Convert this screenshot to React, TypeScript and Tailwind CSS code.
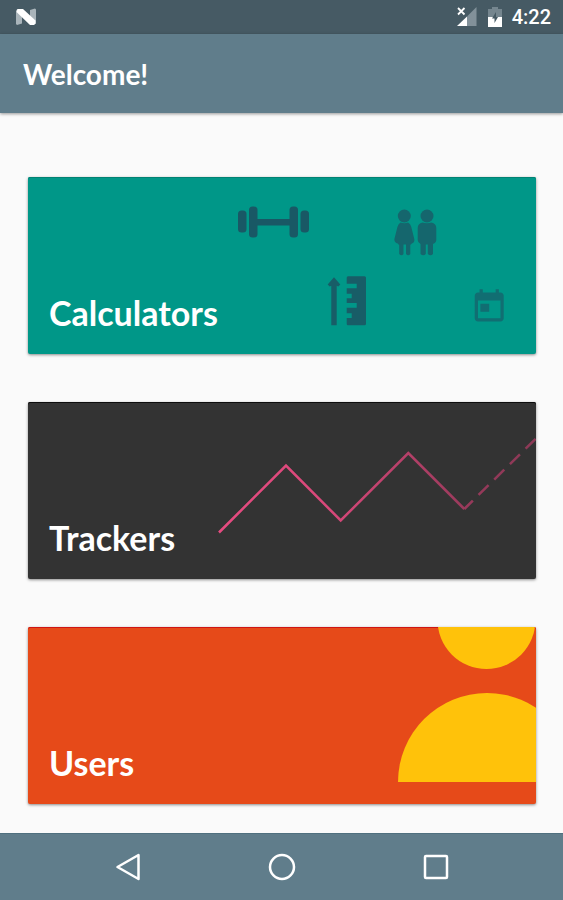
import type { ReactNode } from "react";

function StatusBar() {
  return (
    <div className="flex h-[34px] items-center justify-between bg-[#465a64] pl-[15px] pr-3">
      <svg width="22" height="18" viewBox="0 0 22 18" aria-label="Android N">
        <path d="M1 2.500 2.500 1 7 5v10.500L2 17l-1-1z" fill="#a9b4ba" />
        <path d="M15 2l5-1.500 1 1V15l-1.500 1.500L15 12z" fill="#a9b4ba" />
        <path d="M2.500 1H8l12.500 11.500v3L19 17h-4L1.500 4z" fill="#fff" />
      </svg>

      <div className="flex items-center">
        <svg width="22" height="20" viewBox="0 0 22 20" aria-label="No signal">
          <path d="M20.500 0v19H11V9.500z" fill="#82919a" />
          <path d="M11 9.500V19H1z" fill="#fff" />
          <path d="M2 1l6.500 6.500M8.500 1L2 7.500" stroke="#fff" strokeWidth="1.800" />
        </svg>
        <svg
          className="ml-[9px]"
          width="16"
          height="22"
          viewBox="0 0 16 22"
          aria-label="Battery charging"
        >
          <path d="M5 1h6v2h4v8H1V3h4z" fill="#75868f" />
          <path d="M1 11h14v10H1z" fill="#fff" />
          <path d="M9 6 5 12.500h2.500V17l3.500-6H9z" fill="#465a64" />
        </svg>
        <span className="ml-[9px] font-['Roboto',sans-serif] text-[20px] font-medium leading-6 text-white">
          4:22
        </span>
      </div>
    </div>
  );
}

function CalculatorsArt() {
  return (
    <>
      {/* dumbbell */}
      <g fill="#195865">
        <rect x="210" y="33.500" width="8.500" height="22" rx="3.500" />
        <rect x="221" y="29.500" width="8.500" height="31" rx="3.500" />
        <rect x="227" y="42" width="37" height="6.500" />
        <rect x="261.500" y="29.500" width="8.500" height="31" rx="3.500" />
        <rect x="272.500" y="33.500" width="8.500" height="22" rx="3.500" />
      </g>

      {/* couple */}
      <g fill="#15666d">
        <circle cx="376.300" cy="39" r="6.500" />
        <path d="M372.500 45.500q3.800 1.500 7.600 0 2.400 1 3.200 4.500l3 12q.5 4-2.500 4.500-1 1.200-1.500 1.200V77q-2 2.500-4.300 0V67.500h-2.500V77q-2 2.500-4.300 0v-9.300q-.7 0-1.500-1.200-3.600-.8-3.300-4.500l3-12q1-3.500 3.100-4.500z" />
        <circle cx="399" cy="39" r="6.500" />
        <path d="M394.500 45.500q4.500 1.500 9 0 4.800 1.200 4.800 5.500v12q0 2.500-3.300 4V77q-2.500 2.500-5.200 0V67.500h-2V77q-2.500 2.500-5.300 0V67q-2.800-1.500-2.800-4V51q0-4.300 4.800-5.500z" />
      </g>

      {/* height ruler */}
      <g fill="#185d67">
        <path d="M306 100.300l6.300 7.200-2 2-1.600-.8v39.600h-5.400v-39.600l-1.600.8-2-2z" />
        <path d="M320 99.300h16.500q1.500 0 1.500 1.500v46q0 1.500-1.500 1.500H320q-1.300 0-1.300-1.500V141h5v-4.700h-5v-5.600h10V126h-10v-4.700h5v-4.600h-5v-5.400h10v-4.600h-10v-5.900q0-1.500 1.300-1.500z" />
      </g>

      {/* calendar */}
      <path
        transform="translate(441.900 110.700) scale(1.610)"
        fill="#116e72"
        d="M19 3h-1V1h-2v2H8V1H6v2H5c-1.110 0-1.990.9-1.990 2L3 19c0 1.100.89 2 2 2h14c1.100 0 2-.9 2-2V5c0-1.100-.9-2-2-2zm0 16H5V8h14v11zM6.500 10H12v5H6.500z"
      />
    </>
  );
}

function TrackersArt() {
  return (
    <>
      <defs>
        <linearGradient
          id="trend"
          gradientUnits="userSpaceOnUse"
          x1="191"
          y1="0"
          x2="508"
          y2="0"
        >
          <stop offset="0" stopColor="#e64b80" />
          <stop offset="0.350" stopColor="#d9487a" />
          <stop offset="0.800" stopColor="#96395a" />
          <stop offset="1" stopColor="#8c3956" />
        </linearGradient>
      </defs>
      <g fill="none" stroke="url(#trend)" strokeWidth="2.500">
        <path d="M191 130.500 258 63.500 312.700 118.500 380.300 51 436.300 107" />
        <path d="M436.300 107 509 35.500" strokeDasharray="14 8" strokeDashoffset="2" />
      </g>
    </>
  );
}

function UsersArt() {
  return (
    <g fill="#ffc20a">
      <circle cx="458.500" cy="-7" r="49" />
      <path d="M370 155a89 89 0 0 1 178 0z" />
    </g>
  );
}

type MenuCardProps = {
  title: string;
  href: string;
  color: string;
  children: ReactNode;
};

function MenuCard({ title, href, color, children }: MenuCardProps) {
  return (
    <a
      href={href}
      className={`relative flex h-[177px] items-end overflow-hidden rounded-[2px] px-[21px] pb-[21px] shadow-[0_1px_3px_rgba(0,0,0,0.45)] inset-shadow-[0_1px_0] ${color}`}
    >
      <svg
        className="absolute right-0 top-0"
        width="508"
        height="177"
        viewBox="0 0 508 177"
        aria-hidden="true"
      >
        {children}
      </svg>
      <span className="relative text-[34px] font-bold leading-10 text-white">
        {title}
      </span>
    </a>
  );
}

function NavBar() {
  return (
    <nav className="flex h-[67px] justify-center border-t border-[#50707f] bg-[#607d8b]">
      <button aria-label="Back" className="flex w-[154px] items-center justify-center">
        <svg width="28" height="28" viewBox="0 0 28 28" fill="none" stroke="#fff" strokeWidth="2.500" strokeLinejoin="round">
          <path d="M24.500 2v24L3.500 14z" />
        </svg>
      </button>
      <button aria-label="Home" className="flex w-[154px] items-center justify-center">
        <svg width="28" height="28" viewBox="0 0 28 28" fill="none" stroke="#fff" strokeWidth="2.500">
          <circle cx="14" cy="14" r="12" />
        </svg>
      </button>
      <button aria-label="Overview" className="flex w-[154px] items-center justify-center">
        <svg width="28" height="28" viewBox="0 0 28 28" fill="none" stroke="#fff" strokeWidth="2.500">
          <rect x="3" y="3" width="22" height="22" rx="1" />
        </svg>
      </button>
    </nav>
  );
}

export default function App() {
  return (
    <div className="flex min-h-screen flex-col bg-[#fafafa] font-['Lato',sans-serif]">
      <StatusBar />

      <header className="flex h-[79px] items-center bg-[#607d8b] px-[23px] shadow-[0_1px_3px_rgba(0,0,0,0.4)]">
        <h1 className="text-[28px] font-bold leading-8 text-white">Welcome!</h1>
      </header>

      <main className="flex flex-1 flex-col gap-12 pb-7 pl-7 pr-[27px] pt-16">
        <MenuCard
          title="Calculators"
          href="#calculators"
          color="bg-[#009788] inset-shadow-[#008273]"
        >
          <CalculatorsArt />
        </MenuCard>
        <MenuCard
          title="Trackers"
          href="#trackers"
          color="bg-[#333333] inset-shadow-[#0c0c0c]"
        >
          <TrackersArt />
        </MenuCard>
        <MenuCard
          title="Users"
          href="#users"
          color="bg-[#e64a19] inset-shadow-[#cf1512]"
        >
          <UsersArt />
        </MenuCard>
      </main>

      <NavBar />
    </div>
  );
}
